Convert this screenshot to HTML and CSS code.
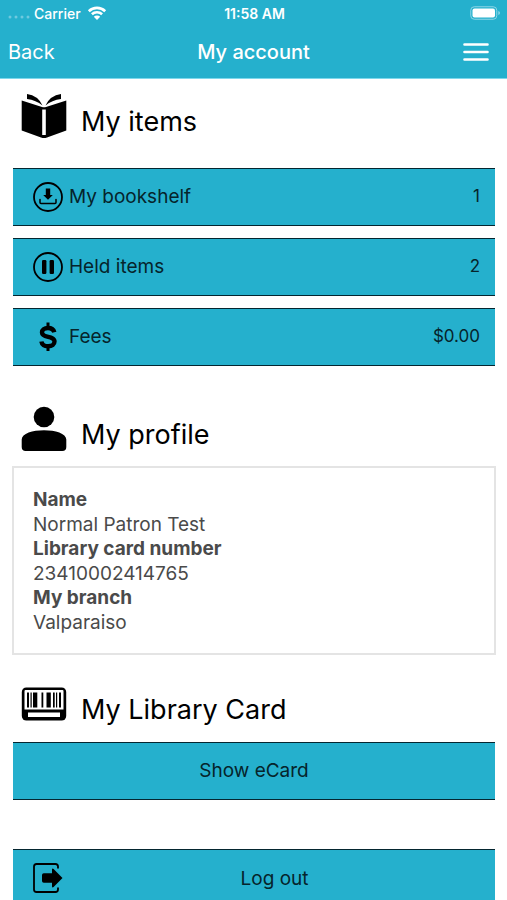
FILE: index.html
```html
<!DOCTYPE html>
<html lang="en">
<head>
<meta charset="utf-8">
<meta name="viewport" content="width=device-width, initial-scale=1">
<title>My account</title>
<link rel="stylesheet" href="styles.css">
</head>
<body>
<header class="top">
  <div class="status">
    <div class="status-left">
      <svg class="signal" viewBox="0 0 22 4" aria-hidden="true"><circle cx="2" cy="2" r="1.5"/><circle cx="8" cy="2" r="1.5"/><circle cx="14" cy="2" r="1.5"/><circle cx="20" cy="2" r="1.5"/></svg>
      <span>Carrier</span>
      <svg class="wifi" viewBox="0 0 20 14" aria-hidden="true">
        <path d="M1.8 5.2a11.8 11.8 0 0 1 16.4 0M4.9 8.3a7.4 7.4 0 0 1 10.2 0" fill="none" stroke="currentColor" stroke-width="2.6"/>
        <path d="M10 14 6.8 10.8a4.6 4.6 0 0 1 6.4 0z" fill="currentColor"/>
      </svg>
    </div>
    <span class="time">11:58 AM</span>
    <svg class="battery" viewBox="0 0 31 14" aria-hidden="true">
      <rect x=".75" y=".75" width="26" height="12.5" rx="3.5" fill="none" stroke="#8dd5e6" stroke-width="1"/>
      <rect x="2.5" y="2.5" width="22.5" height="9" rx="2" fill="#fff"/>
      <path d="M28.3 5v4q1.7-.6 1.7-2t-1.7-2z" fill="#8dd5e6"/>
    </svg>
  </div>
  <nav class="nav">
    <a class="back" href="#">Back</a>
    <h1>My account</h1>
    <button class="menu" type="button" aria-label="Menu">
      <svg viewBox="0 0 26 20" aria-hidden="true"><path d="M1.5 2.5h23M1.5 10h23M1.5 17.5h23" stroke="currentColor" stroke-width="2.6" stroke-linecap="round"/></svg>
    </button>
  </nav>
</header>
<main>
  <section class="items">
    <h2>
      <svg viewBox="0 0 46 46" aria-hidden="true">
        <path d="M.7 7.500 21 14q2 .7 4 0l20.300-6.500V37.500L26 44.500q-3 1-6 0L.7 37.500z"/>
        <path d="M6 1q11 1.500 15.500 11.500Q15 7 6 6zM40 1Q29 2.500 24.500 12.500 31 7 40 6z" stroke="#fff" stroke-width="1.200" paint-order="stroke"/>
        <path d="M23 16.500V42" stroke="#fff" stroke-width="3.600"/>
      </svg>
      <span>My items</span>
    </h2>
    <div class="rows">
      <button class="row" type="button">
        <svg viewBox="0 0 30 30" aria-hidden="true">
          <circle cx="15" cy="15" r="14" fill="none" stroke="currentColor" stroke-width="1.800"/>
          <path d="M12.800 6.500h4.400V13h2.600L15 17.800 10.200 13h2.600z"/>
          <path d="M7 17.500v3q0 1 1 1h14q1 0 1-1v-3" fill="none" stroke="currentColor" stroke-width="1.500" stroke-linecap="round"/>
        </svg>
        <span>My bookshelf</span><span class="count">1</span>
      </button>
      <button class="row" type="button">
        <svg viewBox="0 0 30 30" aria-hidden="true">
          <circle cx="15" cy="15" r="14" fill="none" stroke="currentColor" stroke-width="1.800"/>
          <rect x="9" y="8" width="4.400" height="14" rx="1.200"/><rect x="16.600" y="8" width="4.400" height="14" rx="1.200"/>
        </svg>
        <span>Held items</span><span class="count">2</span>
      </button>
      <button class="row" type="button">
        <svg viewBox="0 0 30 30" aria-hidden="true">
          <path d="M21.300 10.300C20.600 7.500 18.500 6 15 6c-3.700 0-6 1.700-6 4.400 0 6 12.500 3 12.500 9.100 0 2.900-2.500 4.700-6.300 4.700-4 0-6.300-1.700-6.800-4.700" fill="none" stroke="currentColor" stroke-width="4.400"/>
          <path d="M15 .5V6M15 24v5" stroke="currentColor" stroke-width="3"/>
        </svg>
        <span>Fees</span><span class="count">$0.00</span>
      </button>
    </div>
  </section>
  <section class="profile">
    <h2>
      <svg viewBox="0 0 46 46" aria-hidden="true">
        <circle cx="23" cy="11" r="10.300"/>
        <path d="M.7 33.500C.7 21 45.300 21 45.300 33.500V41q0 4-4 4H4.700q-4 0-4-4z"/>
      </svg>
      <span>My profile</span>
    </h2>
    <dl class="card">
      <dt>Name</dt><dd>Normal Patron Test</dd>
      <dt>Library card number</dt><dd>23410002414765</dd>
      <dt>My branch</dt><dd>Valparaiso</dd>
    </dl>
  </section>
  <section class="library">
    <h2>
      <svg viewBox="0 0 46 46" aria-hidden="true">
        <rect x=".8" y="6.500" width="44.400" height="33" rx="4.500"/>
        <path d="M4.500 9h37q1 0 1 1v18.500h-39V10q0-1 1-1z" fill="#fff"/>
        <rect x="7" y="31.500" width="32" height="4.500" fill="#fff"/>
        <path d="M6 11.500h2v15H6zM9.500 11.500h1.200v15H9.500zM12 11.500h4.300v15H12zM20.500 11.500h1.800v15h-1.800zM25.500 11.500h4.300v15h-4.300zM32 11.500h1.700v15H32zM35 11.500h1.200v15H35zM38 11.500h2v15h-2z"/>
      </svg>
      <span>My Library Card</span>
    </h2>
    <button class="row centered" type="button"><span>Show eCard</span></button>
  </section>
  <button class="row logout" type="button">
    <svg viewBox="0 0 30 30" aria-hidden="true">
      <path d="M25 5.500V3.500q0-2.500-2.500-2.500H3.500Q1 1 1 3.500v23Q1 29 3.500 29h19q2.500 0 2.500-2.500v-2" fill="none" stroke="currentColor" stroke-width="1.800"/>
      <path d="M9 12q0-1.800 1.800-1.800H19V6.500q.2-1.500 1.600-.6L29.500 15l-8.900 9.100q-1.400.9-1.600-.6v-3.700h-8.200Q9 19.800 9 18z"/>
    </svg>
    <span>Log out</span>
  </button>
</main>
</body>
</html>
```

FILE: styles.css
```css
* { box-sizing: border-box; }

body {
  margin: 0;
  background: #fff;
  color: #000;
  font-family: Inter, Roboto, "Liberation Sans", sans-serif;
}

body::-webkit-scrollbar { display: none; }

h1, h2, dl, dd { margin: 0; font-weight: 400; }

svg { display: block; flex: none; }

button { font: inherit; color: inherit; }

.top {
  background: #25b0cd;
  border-bottom: 1px solid #7dd8ec;
  color: #fff;
}

.status {
  display: grid;
  grid-template-columns: 1fr auto 1fr;
  align-items: center;
  height: 26px;
  padding: 0 6px 0 8px;
  font-size: 14px;
  font-weight: 500;
}

.status-left { display: flex; align-items: center; gap: 4px; }

.time { font-weight: 600; }

.signal { width: 22px; height: 4px; margin-top: 8px; fill: #6fc9df; }

.wifi { width: 20px; height: 14px; margin-left: 2px; }

.battery { width: 31px; height: 14px; justify-self: end; }

.nav {
  display: grid;
  grid-template-columns: 1fr auto 1fr;
  align-items: center;
  height: 52px;
  padding: 0 8px;
  font-size: 20px;
}

.nav h1 { font-size: 20px; font-weight: 500; }

.back { color: inherit; text-decoration: none; }

.menu {
  justify-self: end;
  margin-right: 10px;
  padding: 0;
  border: 0;
  background: none;
}

.menu svg { width: 26px; height: 20px; }

main { padding: 14px 12px 0 13px; }

h2 {
  display: flex;
  align-items: center;
  gap: 14px;
  height: 46px;
  padding-left: 8px;
  font-size: 27px;
  line-height: 34px;
}

h2 svg { width: 46px; height: 46px; }

h2 span { padding-top: 12px; }

.rows {
  display: grid;
  gap: 12px;
  margin-top: 29px;
}

.row {
  display: flex;
  align-items: center;
  gap: 6px;
  width: 100%;
  height: 58px;
  padding: 0 15px 0 20px;
  border: solid #042630;
  border-width: 1px 0;
  background: #25b0cd;
  color: #06242b;
  font-size: 19px;
}

.row svg { width: 30px; height: 30px; color: #000; }

.row span { padding-bottom: 2px; }

.row .count { margin-left: auto; font-size: 17px; }

.profile { margin-top: 40px; }

.card {
  margin: 14px -1px 0;
  padding: 20px 19px 18px;
  border: 2px solid #e4e4e4;
  color: #4a4a4a;
  font-size: 19px;
}

.card dt { font-weight: 700; line-height: 24px; }

.card dd { line-height: 25px; }

.library { margin-top: 26px; }

.row.centered { justify-content: center; margin-top: 15px; padding: 0 16px; }

.logout { margin-top: 49px; }

.row.logout span { flex: 1; padding-bottom: 0; text-align: center; }
```
